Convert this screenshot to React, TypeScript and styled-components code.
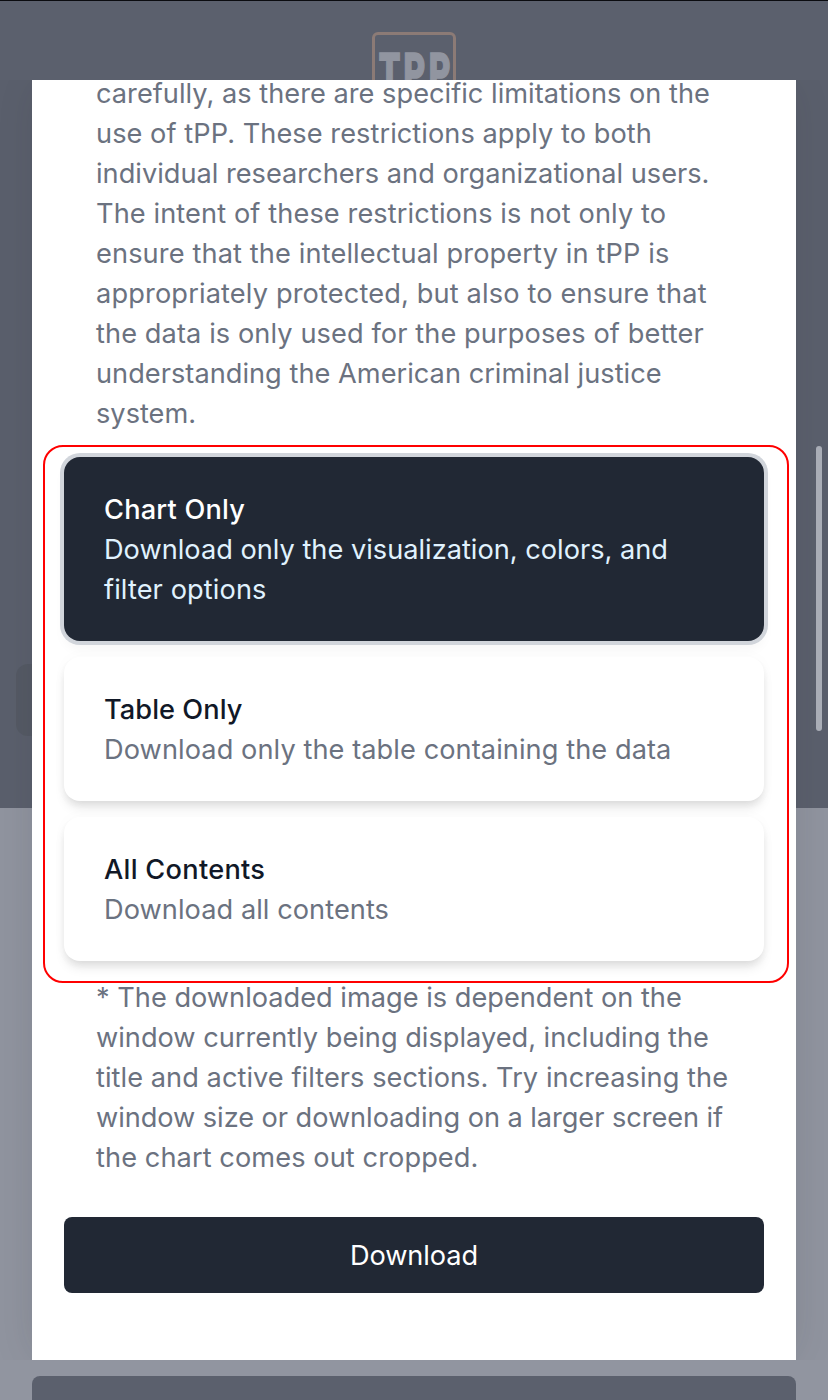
import React from "react";
import styled, { createGlobalStyle } from "styled-components";

const GlobalStyle = createGlobalStyle`
  * { box-sizing: border-box; }
  body {
    margin: 0;
    background: #9195a0;
    font-family: Inter, "Liberation Sans", sans-serif;
    font-size: 27.2px;
    line-height: 40px;
    overflow: hidden;
  }
`;

const Page = styled.div`
  position: relative;
  height: 1400px;
  overflow: hidden;
  display: flex;
  flex-direction: column;
`;

const Hero = styled.header`
  height: 808px;
  flex: none;
  border-top: 1px solid #0b0c10;
  background: #5b606d;
  display: flex;
  flex-direction: column;
  align-items: center;
  padding: 31px 16px 0;
`;

const Logo = styled.div`
  width: 84px;
  height: 85px;
  border: 3px solid #8c7b76;
  border-radius: 6px;
  display: flex;
  justify-content: center;
  padding-top: 11px;
  margin-bottom: 547px;
`;

const LogoText = styled.span`
  font-family: Roboto, "Liberation Sans", sans-serif;
  font-size: 54px;
  font-weight: 900;
  line-height: 54px;
  letter-spacing: 5.5px;
  margin-right: -5px;
  color: #9195a0;
  -webkit-text-stroke: 1.6px #9195a0;
  transform: scaleX(0.62);
`;

const HeroControl = styled.div`
  align-self: flex-start;
  width: 160px;
  height: 72px;
  border-radius: 12px;
  background: #555a65;
`;

const BottomCard = styled.div`
  margin: 568px 32px 0;
  height: 60px;
  flex: none;
  border-radius: 8px;
  background: #5b606d;
`;

const Overlay = styled.div`
  position: absolute;
  inset: 80px 0 40px;
  overflow: hidden;
  display: flex;
  justify-content: center;
`;

const Dialog = styled.section`
  width: 764px;
  height: 1280px;
  padding: 0 32px;
  background: #fff;
  box-shadow: 0 0 44px rgba(40, 44, 48, 0.14);
  display: flex;
  flex-direction: column;
`;

const Copy = styled.p`
  margin: 0;
  padding: 0 32px;
  color: #6b7280;
`;

const Terms = styled(Copy)`
  margin-top: -6px;
`;

const Line = styled.span<{ $track?: number }>`
  display: block;
  white-space: nowrap;
  letter-spacing: ${(p) => p.$track ?? 0}px;
`;

const Options = styled.div`
  margin: 11px -21px 0 -21px;
  width: 746px;
  height: 538px;
  padding: 10px 23px 0 19px;
  border: 2px solid #ff0000;
  border-radius: 20px;
  display: flex;
  flex-direction: column;
  gap: 16px;
  flex: none;
`;

const Option = styled.div<{ $selected?: boolean }>`
  padding: 33px 40px 31px;
  border-radius: 16px;
  flex: none;
  background: ${(p) => (p.$selected ? "#212834" : "#fff")};
  color: ${(p) => (p.$selected ? "#e0f2fe" : "#6b7280")};
  box-shadow: ${(p) => (p.$selected
    ? "0 0 0 4px #d1d5db, 0 8px 12px rgba(0, 0, 0, 0.04)"
    : "0 8px 12px -2px rgba(0, 0, 0, 0.1), 0 4px 8px -2px rgba(0, 0, 0, 0.06), 0 0 16px rgba(0, 0, 0, 0.025)")};
`;

const OptionTitle = styled(Line)<{ $selected?: boolean }>`
  font-weight: 500;
  color: ${(p) => (p.$selected ? "#fff" : "#111827")};
`;

const Note = styled(Copy)`
  margin-top: -5px;
`;

const DownloadButton = styled.button`
  margin-top: 39px;
  height: 76px;
  padding: 2px 0 0;
  flex: none;
  border: 0;
  border-radius: 8px;
  background: #212834;
  color: #fff;
  font: inherit;
  text-align: center;
`;

const Scrollbar = styled.div`
  position: absolute;
  top: 446px;
  right: 6px;
  width: 6px;
  height: 285px;
  border-radius: 3px;
  background: #a9adb6;
`;

type TextLine = [string, number];

const terms: TextLine[] = [
  ["carefully, as there are specific limitations on the", 0.02],
  ["use of tPP. These restrictions apply to both", 0.05],
  ["individual researchers and organizational users.", 0],
  ["The intent of these restrictions is not only to", 0.1],
  ["ensure that the intellectual property in tPP is", 0.12],
  ["appropriately protected, but also to ensure that", 0.14],
  ["the data is only used for the purposes of better", 0.09],
  ["understanding the American criminal justice", 0.02],
  ["system.", 0],
];

const note: TextLine[] = [
  ["* The downloaded image is dependent on the", 0],
  ["window currently being displayed, including the", 0],
  ["title and active filters sections. Try increasing the", 0.05],
  ["window size or downloading on a larger screen if", -0.06],
  ["the chart comes out cropped.", 0.08],
];

const options: { title: TextLine; lines: TextLine[] }[] = [
  {
    title: ["Chart Only", 0.2],
    lines: [
      ["Download only the visualization, colors, and", 0],
      ["filter options", 0.1],
    ],
  },
  { title: ["Table Only", 0.05], lines: [["Download only the table containing the data", 0.07]] },
  { title: ["All Contents", 0.28], lines: [["Download all contents", 0.05]] },
];

const renderLines = (lines: TextLine[]) =>
  lines.map(([text, track]) => (
    <Line key={text} $track={track}>
      {text}
    </Line>
  ));

export default function App() {
  return (
    <Page>
      <GlobalStyle />
      <Hero>
        <Logo>
          <LogoText>TPP</LogoText>
        </Logo>
        <HeroControl />
      </Hero>
      <BottomCard />
      <Overlay>
        <Dialog>
          <Terms>{renderLines(terms)}</Terms>
          <Options>
            {options.map(({ title, lines }, i) => (
              <Option key={title[0]} $selected={i === 0}>
                <OptionTitle $track={title[1]} $selected={i === 0}>
                  {title[0]}
                </OptionTitle>
                {renderLines(lines)}
              </Option>
            ))}
          </Options>
          <Note>{renderLines(note)}</Note>
          <DownloadButton>
            <Line $track={-0.1}>Download</Line>
          </DownloadButton>
        </Dialog>
      </Overlay>
      <Scrollbar />
    </Page>
  );
}
